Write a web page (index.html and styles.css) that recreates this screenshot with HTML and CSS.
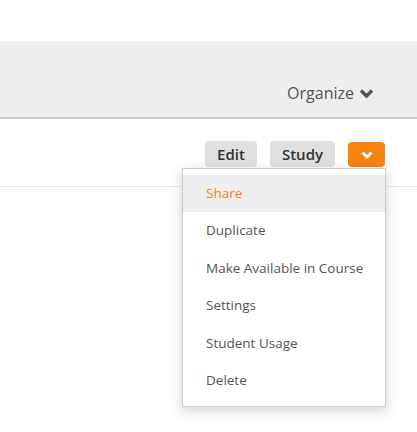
FILE: index.html
```html
<!DOCTYPE html>
<html lang="en">
<head>
    <meta charset="UTF-8">
    <meta name="viewport" content="width=device-width, initial-scale=1.0">
    <title>Set</title>
    <link rel="stylesheet" href="styles.css">
</head>
<body>

    <div class="top"></div>

    <div class="toolbar">
        <button class="organize">Organize
            <svg class="chev" width="15" height="11" viewBox="0 0 15 11">
                <path d="M2 2.5 L7.5 8 L13 2.5" fill="none" stroke="#555" stroke-width="3.4"/>
            </svg>
        </button>
    </div>

    <div class="set-row">
        <div class="actions">
            <button class="btn">Edit</button>
            <button class="btn">Study</button>
            <div class="more-wrap">
                <button class="btn btn-more">
                    <svg width="14" height="10" viewBox="0 0 14 10">
                        <path d="M2.5 2.5 L7 7 L11.5 2.5" fill="none" stroke="#fff" stroke-width="3"/>
                    </svg>
                </button>
                <ul class="menu">
                    <li class="active">Share</li>
                    <li>Duplicate</li>
                    <li>Make Available in Course</li>
                    <li>Settings</li>
                    <li>Student Usage</li>
                    <li>Delete</li>
                </ul>
            </div>
        </div>
    </div>

</body>
</html>
```

FILE: styles.css
```css
html, body {
    min-height: 100%;
}
body {
    margin: 0;
    min-height: 432px;
    font-family: "Open Sans", "Noto Sans", sans-serif;
    background: #fff;
    color: #555;
}
.top {
    height: 41px;
}
.toolbar {
    height: 76px;
    background: #eee;
    border-bottom: 2px solid #ccc;
    display: flex;
    justify-content: flex-end;
    align-items: flex-end;
    padding-right: 43px;
}
.organize {
    border: none;
    background: none;
    font-family: inherit;
    font-size: 16px;
    color: #555;
    padding: 0 0 13px;
    display: flex;
    align-items: center;
    gap: 5px;
}
.set-row {
    height: 67px;
    border-bottom: 1px solid #e8e8e8;
    display: flex;
    justify-content: flex-end;
    padding-right: 32px;
}
.actions {
    display: flex;
    align-items: flex-start;
    gap: 13px;
    padding-top: 22px;
}
.btn {
    height: 26px;
    border: none;
    border-radius: 4px;
    background: #e0e0e0;
    color: #333;
    font-family: inherit;
    font-size: 15px;
    font-weight: 600;
    padding: 0 12px;
    cursor: pointer;
}
.more-wrap {
    position: relative;
}
.btn-more {
    width: 37px;
    height: 25px;
    margin-top: 1px;
    background: #f7820f;
    padding: 0;
    display: flex;
    align-items: center;
    justify-content: center;
}
.menu {
    position: absolute;
    top: 27px;
    right: -1px;
    z-index: 10;
    width: 202px;
    margin: 0;
    padding: 6px 0 7px;
    list-style: none;
    background: #fff;
    border: 1px solid #ccc;
    box-shadow: 0 4px 12px rgba(0,0,0,0.18);
}
.menu li {
    display: block;
    height: 37.4px;
    line-height: 37px;
    padding-left: 23px;
    font-size: 13.5px;
    color: #555;
    white-space: nowrap;
}
.menu li.active {
    background: #eee;
    color: #f7820f;
}
```
